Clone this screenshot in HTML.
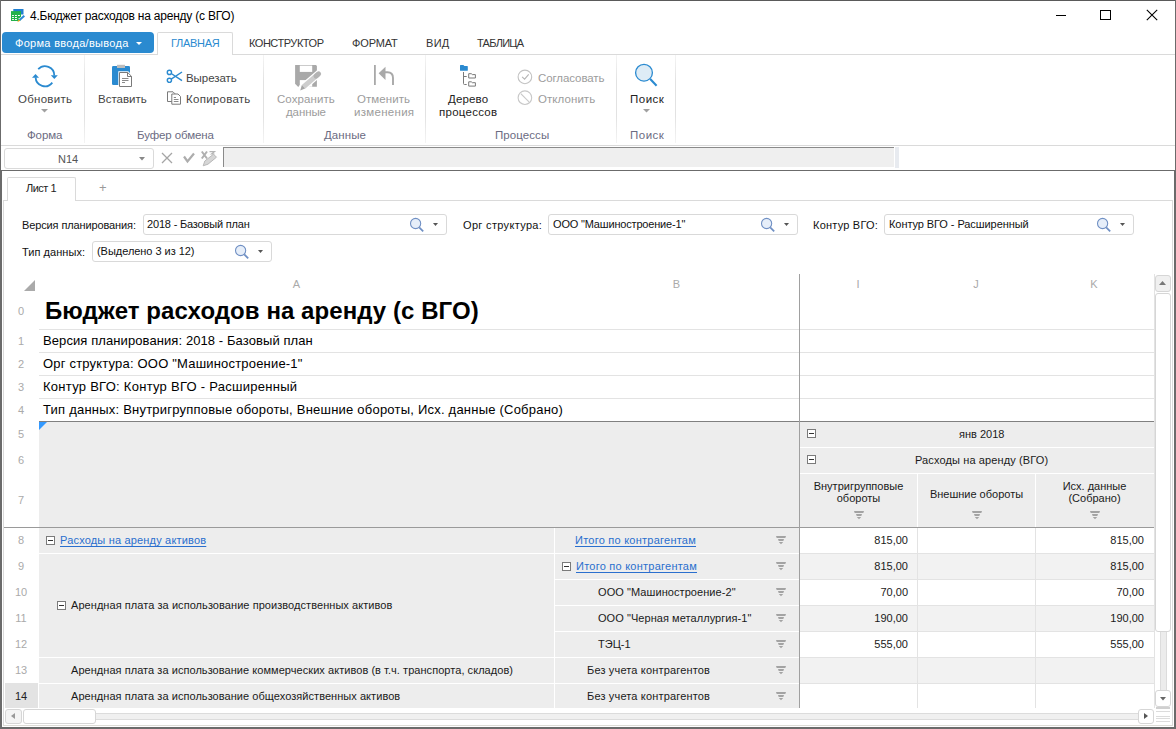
<!DOCTYPE html>
<html><head><meta charset="utf-8">
<style>
*{margin:0;padding:0;box-sizing:border-box}
html,body{width:1176px;height:729px;overflow:hidden;background:#fff}
body{position:relative;font-family:"Liberation Sans",sans-serif;color:#000}
.a{position:absolute}
.t{position:absolute;white-space:nowrap;line-height:1}
.hl{position:absolute;height:1px}
.vl{position:absolute;width:1px}
.tab{font-size:11px;color:#333}
.rib{font-size:11.5px;color:#444}
.dis{color:#9c9c9c}
.grp{font-size:11.5px;color:#6b6b82}
.fl{font-size:11px;color:#111}
.box{position:absolute;border:1px solid #d9d9d9;border-radius:3px;background:#fff;height:21px}
.rn{position:absolute;font-size:11px;color:#aaa;width:36px;text-align:center;line-height:1}
.ch{position:absolute;font-size:11px;color:#aaa;line-height:1;text-align:center}
.g{font-size:11px;color:#1a1a1a}
.lnk{color:#2a6fce;text-decoration:underline;text-underline-offset:2px}
.mb{position:absolute;width:9px;height:9px;border:1px solid #7a7a7a;background:#fff}
.mb:after{content:"";position:absolute;left:1px;top:3px;width:5px;height:1px;background:#333}
</style></head><body>

<!-- window borders -->
<div class="a" style="left:0;top:0;width:1176px;height:1px;background:#5a5a5a"></div>
<div class="a" style="left:0;top:0;width:1px;height:170px;background:#6b6b6b"></div>
<div class="a" style="left:1175px;top:0;width:1px;height:170px;background:#6b6b6b"></div>

<!-- title bar -->
<svg class="a" style="left:8px;top:6px" width="20" height="20" viewBox="0 0 20 20">
 <rect x="5.3" y="3" width="10.2" height="5.5" fill="#1f7fd0"/>
 <rect x="3" y="5.1" width="10" height="9.9" fill="#22b14c"/>
 <g fill="#fff"><rect x="4.1" y="9" width="1.8" height="1"/><rect x="7" y="9" width="1.9" height="1"/><rect x="10" y="9" width="1.9" height="1"/>
 <rect x="4.1" y="11" width="1.8" height="1"/><rect x="7" y="11" width="1.9" height="1"/>
 <rect x="4.1" y="13" width="1.8" height="1"/><rect x="7" y="13" width="1.9" height="1"/></g>
 <path d="M10 12.5 L11 12.5 L15.8 8.6 L17.2 10 L12.8 15 Z" fill="#fff"/>
 <path d="M10.8 13.4 L15.6 9 L17 10.4 L12.2 14.8 Z" fill="#2a88d8"/>
 <path d="M10.8 13.4 L12.2 14.8 L9.2 16.2 Z" fill="#f5a623"/>
</svg>
<div class="t" style="left:30px;top:10px;font-size:12px;letter-spacing:-0.22px;color:#000">4.Бюджет расходов на аренду (с ВГО)</div>
<!-- window controls -->
<div class="a" style="left:1056px;top:15px;width:10px;height:1px;background:#000"></div>
<div class="a" style="left:1100px;top:10px;width:11px;height:10px;border:1px solid #000"></div>
<svg class="a" style="left:1146px;top:9px" width="12" height="12" viewBox="0 0 12 12"><path d="M0.8 0.8L11.2 11.2M11.2 0.8L0.8 11.2" stroke="#000" stroke-width="1.1"/></svg>

<!-- ribbon tabs -->
<div class="a" style="left:2px;top:32px;width:152px;height:21px;background:#2a8ad0;border-radius:4px"></div>
<div class="t" style="left:15px;top:38px;font-size:11px;letter-spacing:0.3px;color:#fff">Форма ввода/вывода</div>
<svg class="a" style="left:136px;top:42px" width="6" height="4"><path d="M0 0H6L3 3Z" fill="#fff"/></svg>
<div class="a" style="left:157px;top:32px;width:76px;height:23px;border:1px solid #dadada;border-bottom:none;background:#fff;border-radius:2px 2px 0 0"></div>
<div class="t tab" style="left:171px;top:38px;letter-spacing:-0.3px;color:#2a8ad0">ГЛАВНАЯ</div>
<div class="t tab" style="left:249px;top:38px;letter-spacing:-0.47px">КОНСТРУКТОР</div>
<div class="t tab" style="left:352px;top:38px;letter-spacing:-0.14px">ФОРМАТ</div>
<div class="t tab" style="left:426px;top:38px;letter-spacing:0.3px">ВИД</div>
<div class="t tab" style="left:477px;top:38px;letter-spacing:-0.75px">ТАБЛИЦА</div>
<div class="hl" style="left:1px;top:54px;width:156px;background:#dadada"></div>
<div class="hl" style="left:233px;top:54px;width:942px;background:#dadada"></div>

<!-- ribbon separators -->
<div class="vl" style="left:84px;top:55px;height:88px;background:linear-gradient(#f4f4f4,#e2e2e2 30%,#e2e2e2 70%,#f4f4f4)"></div>
<div class="vl" style="left:263px;top:55px;height:88px;background:linear-gradient(#f4f4f4,#e2e2e2 30%,#e2e2e2 70%,#f4f4f4)"></div>
<div class="vl" style="left:425px;top:55px;height:88px;background:linear-gradient(#f4f4f4,#e2e2e2 30%,#e2e2e2 70%,#f4f4f4)"></div>
<div class="vl" style="left:616px;top:55px;height:88px;background:linear-gradient(#f4f4f4,#e2e2e2 30%,#e2e2e2 70%,#f4f4f4)"></div>
<div class="vl" style="left:675px;top:55px;height:88px;background:linear-gradient(#f4f4f4,#e2e2e2 30%,#e2e2e2 70%,#f4f4f4)"></div>

<!-- Обновить -->
<svg class="a" style="left:28px;top:60px" width="36" height="32" viewBox="0 0 36 32">
 <path d="M10.2 9.2 A9.3 9.3 0 0 1 26.3 15.6" fill="none" stroke="#2a8ad0" stroke-width="1.8"/>
 <path d="M22.8 15.3 H29.8 L26.3 19 Z" fill="#2a8ad0"/>
 <path d="M24.3 22.6 A9.3 9.3 0 0 1 7.6 17.4" fill="none" stroke="#2a8ad0" stroke-width="1.8"/>
 <path d="M4 17.7 H11 L7.5 14 Z" fill="#2a8ad0"/>
</svg>
<div class="t rib" style="left:18px;top:94px;letter-spacing:0.27px">Обновить</div>
<svg class="a" style="left:41px;top:109px" width="8" height="4"><path d="M0 0H7L3.5 3.5Z" fill="#a0a0a0"/></svg>
<div class="t grp" style="left:27px;top:130px;letter-spacing:-0.12px">Форма</div>

<!-- Вставить -->
<svg class="a" style="left:106px;top:60px" width="32" height="32" viewBox="0 0 32 32">
 <rect x="6" y="6" width="18" height="19" rx="1.3" fill="#2a8ad0"/>
 <rect x="11" y="4.8" width="8" height="3.2" fill="#bdbdbd"/>
 <path d="M12.3 11.3 H22.2 L26.7 15.8 V27.5 H12.3 Z" fill="#fff"/>
 <path d="M13.5 12.5 H21.7 L25.5 16.3 V26.5 H13.5 Z" fill="#fff" stroke="#7a7a7a"/>
 <path d="M21.5 12.5 V16.5 H25.5" fill="none" stroke="#7a7a7a"/>
 <path d="M16 18.5H22.5M16 20.5H22.5M16 22.5H19" stroke="#8a8a8a"/>
</svg>
<div class="t rib" style="left:98px;top:94px">Вставить</div>
<!-- cut/copy -->
<svg class="a" style="left:162px;top:64px" width="24" height="44" viewBox="0 0 24 44">
 <circle cx="7.4" cy="8.4" r="2.1" fill="none" stroke="#2a8ad0" stroke-width="1.4"/>
 <circle cx="7.4" cy="16.3" r="2.1" fill="none" stroke="#2a8ad0" stroke-width="1.4"/>
 <path d="M9.2 9.5 L20 16.7 M9.2 15.2 L20 8" stroke="#2a8ad0" stroke-width="1.5"/>
 <path d="M5.5 27.8 H11 L13 29.8 V37.5 H5.5 Z" fill="#fff" stroke="#7a7a7a"/>
 <path d="M9.8 30 H16 L18.5 32.5 V40.2 H9.8 Z" fill="#fff" stroke="#7a7a7a"/>
 <path d="M11.8 33.5H14M11.8 35.5H16.5M11.8 37.5H16.5" stroke="#8a8a8a"/>
</svg>
<div class="t rib" style="left:186px;top:73px;letter-spacing:-0.05px">Вырезать</div>
<div class="t rib" style="left:186px;top:94px;letter-spacing:0.27px">Копировать</div>
<div class="t grp" style="left:137px;top:130px;letter-spacing:-0.12px">Буфер обмена</div>

<!-- Сохранить -->
<svg class="a" style="left:285px;top:58px" width="40" height="36" viewBox="0 0 40 36">
 <path d="M10.1 7.1 H31 L31.9 8 V28.7 H13 L10.1 25.8 Z" fill="#a9a9a9"/>
 <rect x="14.8" y="7.6" width="12.4" height="6.3" fill="#fff"/>
 <rect x="14.8" y="22.1" width="12.4" height="6.6" fill="#fff"/>
 <path d="M17.5 29.6 L34.2 15.3" stroke="#fff" stroke-width="7.4" stroke-linecap="round"/>
 <path d="M18.5 28.8 L33.2 16.2" stroke="#cdcdcd" stroke-width="5"/>
 <path d="M31 18.1 L33.6 15.8" stroke="#b3b3b3" stroke-width="5" stroke-linecap="round"/>
 <path d="M16.9 27 L20.1 30.6 L15.2 32.4 Z" fill="#a5a5a5"/>
</svg>
<div class="t rib dis" style="left:277px;top:94px;letter-spacing:0.07px">Сохранить</div>
<div class="t rib dis" style="left:286px;top:107px;letter-spacing:-0.1px">данные</div>
<!-- Отменить -->
<svg class="a" style="left:372px;top:64px" width="24" height="22" viewBox="0 0 24 22">
 <rect x="2" y="1" width="1.8" height="20" fill="#a9a9a9"/>
 <path d="M6.6 9.3 L13.5 2.7 V16 Z" fill="#a9a9a9"/>
 <path d="M12 8.3 H15.5 Q21 8.3 21 14 V21" fill="none" stroke="#a9a9a9" stroke-width="1.9"/>
</svg>
<div class="t rib dis" style="left:357px;top:94px;letter-spacing:0.07px">Отменить</div>
<div class="t rib dis" style="left:354px;top:107px;letter-spacing:0.29px">изменения</div>
<div class="t grp" style="left:324px;top:130px;letter-spacing:0.08px">Данные</div>

<!-- Дерево процессов -->
<svg class="a" style="left:452px;top:60px" width="32" height="32" viewBox="0 0 32 32">
 <path d="M8 5.6 Q8 5 8.6 5 H11.4 L12.4 6 H15.2 Q15.8 6 15.8 6.6 V10.2 Q15.8 10.8 15.2 10.8 H8.6 Q8 10.8 8 10.2 Z" fill="#2a8ad0"/>
 <path d="M11.5 12 V23.5 Q11.5 24.5 12.5 24.5 H14.7 M11.5 16.5 H14.7" fill="none" stroke="#7a7a7a"/>
 <path d="M16.7 13.7 H19.3 L20.3 14.6 H23.4 V18 H16.7 Z" fill="none" stroke="#7a7a7a"/>
 <path d="M16.7 21.8 H19.3 L20.3 22.7 H23.4 V26.1 H16.7 Z" fill="none" stroke="#7a7a7a"/>
</svg>
<div class="t rib" style="left:448px;top:94px;letter-spacing:0.16px;color:#222">Дерево</div>
<div class="t rib" style="left:439px;top:107px;letter-spacing:0.26px;color:#222">процессов</div>
<svg class="a" style="left:512px;top:64px" width="28" height="46" viewBox="0 0 28 46">
 <circle cx="12.9" cy="12.9" r="6.8" fill="none" stroke="#c2c2c2" stroke-width="1.1"/>
 <path d="M10.1 12.9 L12.6 15.1 L16.7 10.4" fill="none" stroke="#b5b5b5" stroke-width="1.1"/>
 <circle cx="12.9" cy="33.7" r="6.8" fill="none" stroke="#c8c8c8" stroke-width="1.1"/>
 <path d="M8.8 29.6 L17 37.8" stroke="#c8c8c8" stroke-width="1.1"/>
</svg>
<div class="t rib dis" style="left:538px;top:73px;letter-spacing:-0.09px">Согласовать</div>
<div class="t rib dis" style="left:538px;top:94px;letter-spacing:0.07px">Отклонить</div>
<div class="t grp" style="left:495px;top:130px;letter-spacing:0.07px">Процессы</div>

<!-- Поиск -->
<svg class="a" style="left:630px;top:60px" width="32" height="32" viewBox="0 0 32 32">
 <circle cx="14" cy="12.7" r="8.4" fill="#deecf6" stroke="#2a8ad0" stroke-width="1.3"/>
 <path d="M20.2 19.1 L26.6 25.7" stroke="#2a8ad0" stroke-width="2.1"/>
</svg>
<div class="t rib" style="left:630px;top:94px;letter-spacing:0.5px;color:#222">Поиск</div>
<svg class="a" style="left:643px;top:109px" width="8" height="4"><path d="M0 0H7L3.5 3.5Z" fill="#a0a0a0"/></svg>
<div class="t grp" style="left:630px;top:130px;letter-spacing:0.5px">Поиск</div>

<div class="hl" style="left:1px;top:145px;width:1174px;background:#dadada"></div>

<!-- formula bar -->
<div class="a" style="left:4px;top:148px;width:150px;height:21px;border:1px solid #dadada;border-radius:3px"></div>
<div class="t" style="left:58px;top:154px;font-size:11px;color:#555">N14</div>
<svg class="a" style="left:139px;top:157px" width="7" height="4"><path d="M0 0H6L3 3.5Z" fill="#888"/></svg>
<svg class="a" style="left:161px;top:152px" width="12" height="12" viewBox="0 0 12 12"><path d="M1 1L11 11M11 1L1 11" stroke="#a5a5a5" stroke-width="1.3"/></svg>
<svg class="a" style="left:183px;top:152px" width="12" height="12" viewBox="0 0 12 12"><path d="M1 4.5 L4.5 9.5 L11 1.5" fill="none" stroke="#adadad" stroke-width="2.2"/></svg>
<svg class="a" style="left:200px;top:149px" width="18" height="18" viewBox="0 0 18 18">
 <path d="M1.8 2.5 L7 9.5 M7 2.5 L1.8 9.5" stroke="#b0b0b0" stroke-width="2"/>
 <path d="M9.5 2.6 H14.5 L11.5 5 H14.5" fill="none" stroke="#b5b5b5" stroke-width="1.2"/>
 <path d="M3.2 16.8 L4.8 12 L13.5 5.2 L16.5 8.2 L8 15.2 Z" fill="#d6d6d6" stroke="#b3b3b3" stroke-width="0.9"/>
</svg>
<div class="a" style="left:223px;top:147px;width:671px;height:20px;background:#efefef;border-top:1px solid #8a8a8a;border-left:1px solid #8a8a8a"></div>
<div class="a" style="left:895px;top:147px;width:4px;height:21px;background:#e8ebf0"></div>
<div class="hl" style="left:0;top:170px;width:1176px;background:#6b6b6b"></div>

<!-- left/right/bottom thick borders below -->
<div class="a" style="left:0;top:170px;width:2px;height:559px;background:#6b6b6b"></div>
<div class="a" style="left:1174px;top:170px;width:2px;height:559px;background:#6b6b6b"></div>
<div class="a" style="left:0;top:727px;width:1176px;height:2px;background:#6b6b6b"></div>

<!-- sheet tabs -->
<div class="a" style="left:7px;top:177px;width:69px;height:24px;border:1px solid #dadada;border-bottom:none;background:#fff;border-radius:2px 2px 0 0"></div>
<div class="t" style="left:26px;top:183px;font-size:11px;letter-spacing:-0.5px;color:#222">Лист 1</div>
<div class="t" style="left:99px;top:181px;font-size:13px;color:#9a9a9a">+</div>
<div class="hl" style="left:3px;top:200px;width:5px;background:#dadada"></div>
<div class="hl" style="left:76px;top:200px;width:1097px;background:#dadada"></div>
<div class="vl" style="left:3px;top:200px;height:525px;background:#dadada"></div>
<div class="vl" style="left:1172px;top:200px;height:525px;background:#dadada"></div>
<div class="hl" style="left:3px;top:725px;width:1170px;background:#dcdcd6"></div>

<!-- filters -->
<div class="t fl" style="left:22px;top:220px;letter-spacing:-0.12px">Версия планирования:</div>
<div class="box" style="left:143px;top:214px;width:304px"></div>
<div class="t fl" style="left:147px;top:219px;letter-spacing:-0.18px">2018 - Базовый план</div>
<div class="t fl" style="left:463px;top:220px;letter-spacing:0.33px">Орг структура:</div>
<div class="box" style="left:548px;top:214px;width:250px"></div>
<div class="t fl" style="left:553px;top:219px;letter-spacing:-0.18px">ООО "Машиностроение-1"</div>
<div class="t fl" style="left:813px;top:220px;letter-spacing:0.22px">Контур ВГО:</div>
<div class="box" style="left:884px;top:214px;width:250px"></div>
<div class="t fl" style="left:889px;top:219px;letter-spacing:-0.07px">Контур ВГО - Расширенный</div>
<div class="t fl" style="left:22px;top:247px;letter-spacing:0.05px">Тип данных:</div>
<div class="box" style="left:92px;top:241px;width:180px"></div>
<div class="t fl" style="left:97px;top:246px;letter-spacing:-0.04px">(Выделено 3 из 12)</div>

<svg class="a" style="left:404px;top:214px" width="40" height="22" viewBox="0 0 40 22"><circle cx="11.6" cy="9.5" r="5.1" fill="#e6eef9" stroke="#7090c4" stroke-width="1.1"/><path d="M15.2 13.3 L19.2 17.3" stroke="#7090c4" stroke-width="1.8"/><path d="M29 9 H34 L31.5 12 Z" fill="#555"/></svg>
<svg class="a" style="left:755px;top:214px" width="40" height="22" viewBox="0 0 40 22"><circle cx="11.6" cy="9.5" r="5.1" fill="#e6eef9" stroke="#7090c4" stroke-width="1.1"/><path d="M15.2 13.3 L19.2 17.3" stroke="#7090c4" stroke-width="1.8"/><path d="M29 9 H34 L31.5 12 Z" fill="#555"/></svg>
<svg class="a" style="left:1091px;top:214px" width="40" height="22" viewBox="0 0 40 22"><circle cx="11.6" cy="9.5" r="5.1" fill="#e6eef9" stroke="#7090c4" stroke-width="1.1"/><path d="M15.2 13.3 L19.2 17.3" stroke="#7090c4" stroke-width="1.8"/><path d="M29 9 H34 L31.5 12 Z" fill="#555"/></svg>
<svg class="a" style="left:229px;top:241px" width="40" height="22" viewBox="0 0 40 22"><circle cx="11.6" cy="9.5" r="5.1" fill="#e6eef9" stroke="#7090c4" stroke-width="1.1"/><path d="M15.2 13.3 L19.2 17.3" stroke="#7090c4" stroke-width="1.8"/><path d="M29 9 H34 L31.5 12 Z" fill="#555"/></svg>

<!-- ===== GRID ===== -->
<svg class="a" style="left:24px;top:280px" width="12" height="12"><path d="M0 11H11V0Z" fill="#aaa"/></svg>
<div class="ch" style="left:39px;top:279px;width:515px">A</div>
<div class="ch" style="left:554px;top:279px;width:245px">B</div>
<div class="ch" style="left:799px;top:279px;width:118px">I</div>
<div class="ch" style="left:917px;top:279px;width:118px">J</div>
<div class="ch" style="left:1035px;top:279px;width:118px">K</div>

<!-- row numbers -->
<div class="rn" style="left:3px;top:306px">0</div>
<div class="rn" style="left:3px;top:336px">1</div>
<div class="rn" style="left:3px;top:359px">2</div>
<div class="rn" style="left:3px;top:382px">3</div>
<div class="rn" style="left:3px;top:405px">4</div>
<div class="rn" style="left:3px;top:429px">5</div>
<div class="rn" style="left:3px;top:455px">6</div>
<div class="rn" style="left:3px;top:495px">7</div>
<div class="rn" style="left:3px;top:535px">8</div>
<div class="rn" style="left:3px;top:561px">9</div>
<div class="rn" style="left:3px;top:587px">10</div>
<div class="rn" style="left:3px;top:613px">11</div>
<div class="rn" style="left:3px;top:639px">12</div>
<div class="rn" style="left:3px;top:665px">13</div>
<div class="a" style="left:5px;top:683px;width:33px;height:25px;background:#e3e3e3"></div>
<div class="rn" style="left:3px;top:691px;color:#222">14</div>

<!-- top rows 0-4 -->
<div class="t" style="left:45px;top:299px;font-size:24px;font-weight:bold;letter-spacing:0.07px">Бюджет расходов на аренду (с ВГО)</div>
<div class="hl" style="left:39px;top:329px;width:1115px;background:#e3e3e3"></div>
<div class="hl" style="left:39px;top:352px;width:1115px;background:#e3e3e3"></div>
<div class="hl" style="left:39px;top:375px;width:1115px;background:#e3e3e3"></div>
<div class="hl" style="left:39px;top:398px;width:1115px;background:#e3e3e3"></div>
<div class="t" style="left:43px;top:334px;font-size:13px;letter-spacing:0.09px">Версия планирования: 2018 - Базовый план</div>
<div class="t" style="left:43px;top:357px;font-size:13px;letter-spacing:0.19px">Орг структура: ООО "Машиностроение-1"</div>
<div class="t" style="left:43px;top:380px;font-size:13px;letter-spacing:0.27px">Контур ВГО: Контур ВГО - Расширенный</div>
<div class="t" style="left:43px;top:403px;font-size:13px;letter-spacing:0.22px">Тип данных: Внутригрупповые обороты, Внешние обороты, Исх. данные (Собрано)</div>

<!-- header block rows 5-7 -->
<div class="a" style="left:39px;top:422px;width:1115px;height:105px;background:#ededed"></div>
<div class="hl" style="left:39px;top:421px;width:1115px;background:#808080"></div>
<svg class="a" style="left:39px;top:422px" width="9" height="9"><path d="M0 0H8L0 8Z" fill="#3399ff"/></svg>
<div class="hl" style="left:800px;top:447px;width:354px;background:#fff"></div>
<div class="hl" style="left:800px;top:473px;width:354px;background:#fff"></div>
<div class="vl" style="left:917px;top:474px;height:53px;background:#fff"></div>
<div class="vl" style="left:1035px;top:474px;height:53px;background:#fff"></div>
<div class="mb" style="left:807px;top:429px"></div>
<div class="mb" style="left:807px;top:455px"></div>
<div class="t g" style="left:959px;top:429px">янв 2018</div>
<div class="t g" style="left:915px;top:455px;letter-spacing:0.12px">Расходы на аренду (ВГО)</div>
<div class="t g" style="left:800px;top:480px;width:117px;text-align:center;line-height:12px;white-space:normal">Внутригрупповые<br>обороты</div>
<div class="t g" style="left:918px;top:489px;width:117px;text-align:center">Внешние обороты</div>
<div class="t g" style="left:1036px;top:480px;width:117px;text-align:center;line-height:12px;white-space:normal">Исх. данные<br>(Собрано)</div>
<svg class="a" style="left:854px;top:511px" width="12" height="10"><path d="M0 0H10L9.3 2H0.7ZM2 3H8L7.3 5H2.7ZM2.8 6H7.2L5 8.3Z" fill="#a3a3a3"/></svg>
<svg class="a" style="left:972px;top:511px" width="12" height="10"><path d="M0 0H10L9.3 2H0.7ZM2 3H8L7.3 5H2.7ZM2.8 6H7.2L5 8.3Z" fill="#a3a3a3"/></svg>
<svg class="a" style="left:1090px;top:511px" width="12" height="10"><path d="M0 0H10L9.3 2H0.7ZM2 3H8L7.3 5H2.7ZM2.8 6H7.2L5 8.3Z" fill="#a3a3a3"/></svg>
<div class="hl" style="left:4px;top:527px;width:1150px;background:#9a9a9a"></div>

<!-- data rows -->
<div class="a" style="left:39px;top:528px;width:760px;height:180px;background:#ededed"></div>
<div class="hl" style="left:39px;top:553px;width:760px;background:#fff"></div>
<div class="hl" style="left:554px;top:579px;width:245px;background:#fff"></div>
<div class="hl" style="left:554px;top:605px;width:245px;background:#fff"></div>
<div class="hl" style="left:554px;top:631px;width:245px;background:#fff"></div>
<div class="hl" style="left:39px;top:657px;width:760px;background:#fff"></div>
<div class="hl" style="left:39px;top:683px;width:760px;background:#fff"></div>
<div class="vl" style="left:554px;top:528px;height:180px;background:#fff"></div>

<!-- right data -->
<div class="a" style="left:800px;top:554px;width:354px;height:25px;background:#f2f2f2"></div>
<div class="a" style="left:800px;top:606px;width:354px;height:25px;background:#f2f2f2"></div>
<div class="a" style="left:800px;top:658px;width:354px;height:25px;background:#f2f2f2"></div>
<div class="hl" style="left:800px;top:553px;width:354px;background:#e3e3e3"></div>
<div class="hl" style="left:800px;top:579px;width:354px;background:#e3e3e3"></div>
<div class="hl" style="left:800px;top:605px;width:354px;background:#e3e3e3"></div>
<div class="hl" style="left:800px;top:631px;width:354px;background:#e3e3e3"></div>
<div class="hl" style="left:800px;top:657px;width:354px;background:#e3e3e3"></div>
<div class="hl" style="left:800px;top:683px;width:354px;background:#e3e3e3"></div>
<div class="vl" style="left:917px;top:528px;height:180px;background:#e3e3e3"></div>
<div class="vl" style="left:1035px;top:528px;height:180px;background:#e3e3e3"></div>

<!-- freeze line -->
<div class="vl" style="left:799px;top:274px;height:434px;background:#a0a0a0"></div>

<!-- row 8 -->
<div class="mb" style="left:46px;top:536px"></div>
<div class="t g lnk" style="left:60px;top:535px;letter-spacing:0.18px">Расходы на аренду активов</div>
<div class="t g lnk" style="left:575px;top:535px;letter-spacing:0.24px">Итого по контрагентам</div>
<!-- row 9 -->
<div class="mb" style="left:562px;top:562px"></div>
<div class="t g lnk" style="left:576px;top:561px;letter-spacing:0.24px">Итого по контрагентам</div>
<div class="mb" style="left:57px;top:601px"></div>
<div class="t g" style="left:71px;top:600px;letter-spacing:0.06px">Арендная плата за использование производственных активов</div>
<div class="t g" style="left:598px;top:587px;letter-spacing:0.07px">ООО "Машиностроение-2"</div>
<div class="t g" style="left:598px;top:613px;letter-spacing:0.06px">ООО "Черная металлургия-1"</div>
<div class="t g" style="left:598px;top:639px">ТЭЦ-1</div>
<div class="t g" style="left:71px;top:665px;letter-spacing:0.05px">Арендная плата за использование коммерческих активов (в т.ч. транспорта, складов)</div>
<div class="t g" style="left:587px;top:665px;letter-spacing:0.16px">Без учета контрагентов</div>
<div class="t g" style="left:71px;top:691px;letter-spacing:0.05px">Арендная плата за использование общехозяйственных активов</div>
<div class="t g" style="left:587px;top:691px;letter-spacing:0.16px">Без учета контрагентов</div>

<!-- filter icons col B -->
<svg class="a" style="left:776px;top:536px" width="12" height="10"><path d="M0 0H10L9.3 2H0.7ZM2 3H8L7.3 5H2.7ZM2.8 6H7.2L5 8.3Z" fill="#a3a3a3"/></svg>
<svg class="a" style="left:776px;top:562px" width="12" height="10"><path d="M0 0H10L9.3 2H0.7ZM2 3H8L7.3 5H2.7ZM2.8 6H7.2L5 8.3Z" fill="#a3a3a3"/></svg>
<svg class="a" style="left:776px;top:588px" width="12" height="10"><path d="M0 0H10L9.3 2H0.7ZM2 3H8L7.3 5H2.7ZM2.8 6H7.2L5 8.3Z" fill="#a3a3a3"/></svg>
<svg class="a" style="left:776px;top:614px" width="12" height="10"><path d="M0 0H10L9.3 2H0.7ZM2 3H8L7.3 5H2.7ZM2.8 6H7.2L5 8.3Z" fill="#a3a3a3"/></svg>
<svg class="a" style="left:776px;top:640px" width="12" height="10"><path d="M0 0H10L9.3 2H0.7ZM2 3H8L7.3 5H2.7ZM2.8 6H7.2L5 8.3Z" fill="#a3a3a3"/></svg>
<svg class="a" style="left:776px;top:666px" width="12" height="10"><path d="M0 0H10L9.3 2H0.7ZM2 3H8L7.3 5H2.7ZM2.8 6H7.2L5 8.3Z" fill="#a3a3a3"/></svg>
<svg class="a" style="left:776px;top:692px" width="12" height="10"><path d="M0 0H10L9.3 2H0.7ZM2 3H8L7.3 5H2.7ZM2.8 6H7.2L5 8.3Z" fill="#a3a3a3"/></svg>

<!-- numbers -->
<div class="t g" style="left:800px;top:535px;width:108px;text-align:right">815,00</div>
<div class="t g" style="left:1036px;top:535px;width:108px;text-align:right">815,00</div>
<div class="t g" style="left:800px;top:561px;width:108px;text-align:right">815,00</div>
<div class="t g" style="left:1036px;top:561px;width:108px;text-align:right">815,00</div>
<div class="t g" style="left:800px;top:587px;width:108px;text-align:right">70,00</div>
<div class="t g" style="left:1036px;top:587px;width:108px;text-align:right">70,00</div>
<div class="t g" style="left:800px;top:613px;width:108px;text-align:right">190,00</div>
<div class="t g" style="left:1036px;top:613px;width:108px;text-align:right">190,00</div>
<div class="t g" style="left:800px;top:639px;width:108px;text-align:right">555,00</div>
<div class="t g" style="left:1036px;top:639px;width:108px;text-align:right">555,00</div>

<!-- vertical scrollbar -->
<div class="vl" style="left:1154px;top:274px;height:434px;background:#e3e3e3"></div>
<div class="a" style="left:1155px;top:275px;width:16px;height:17px;border:1px solid #d6d6d6;border-radius:3px;background:#f0f0f0"></div>
<svg class="a" style="left:1159px;top:281px" width="8" height="5"><path d="M0 4H7L3.5 0Z" fill="#777"/></svg>
<div class="a" style="left:1160px;top:630px;width:7px;height:62px;border-left:1px solid #dcdcdc;border-right:1px solid #dcdcdc;background:#ececec"></div>
<div class="a" style="left:1155px;top:293px;width:16px;height:339px;border:1px solid #d6d6d6;border-radius:3px;background:#fff"></div>
<div class="a" style="left:1155px;top:690px;width:16px;height:17px;border:1px solid #d6d6d6;border-radius:3px;background:#fff"></div>
<svg class="a" style="left:1160px;top:697px" width="7" height="4"><path d="M0 0H6L3 3.5Z" fill="#666"/></svg>
<div class="hl" style="left:1156px;top:707px;width:14px;height:2px;background:#d0d0d0"></div>
<div class="hl" style="left:1156px;top:711px;width:14px;background:#dcdcdc"></div>
<div class="hl" style="left:1156px;top:716px;width:14px;background:#dcdcdc"></div>
<div class="hl" style="left:1156px;top:718px;width:14px;background:#dcdcdc"></div>
<div class="hl" style="left:1156px;top:721px;width:14px;background:#dcdcdc"></div>

<!-- horizontal scrollbar -->
<div class="a" style="left:96px;top:713px;width:1042px;height:7px;border-top:1px solid #dcdcdc;border-bottom:1px solid #dcdcdc;background:#f0f0f0"></div>
<div class="a" style="left:5px;top:709px;width:17px;height:15px;border:1px solid #d6d6d6;border-radius:3px;background:#f4f4f4"></div>
<svg class="a" style="left:11px;top:713px" width="5" height="7"><path d="M4 0V6L0 3Z" fill="#999"/></svg>
<div class="a" style="left:23px;top:709px;width:73px;height:15px;border:1px solid #d6d6d6;border-radius:3px;background:#fff"></div>
<div class="a" style="left:1138px;top:709px;width:16px;height:15px;border:1px solid #d6d6d6;border-radius:3px;background:#fff"></div>
<svg class="a" style="left:1144px;top:713px" width="5" height="7"><path d="M0 0V6L4 3Z" fill="#555"/></svg>
</body></html>
